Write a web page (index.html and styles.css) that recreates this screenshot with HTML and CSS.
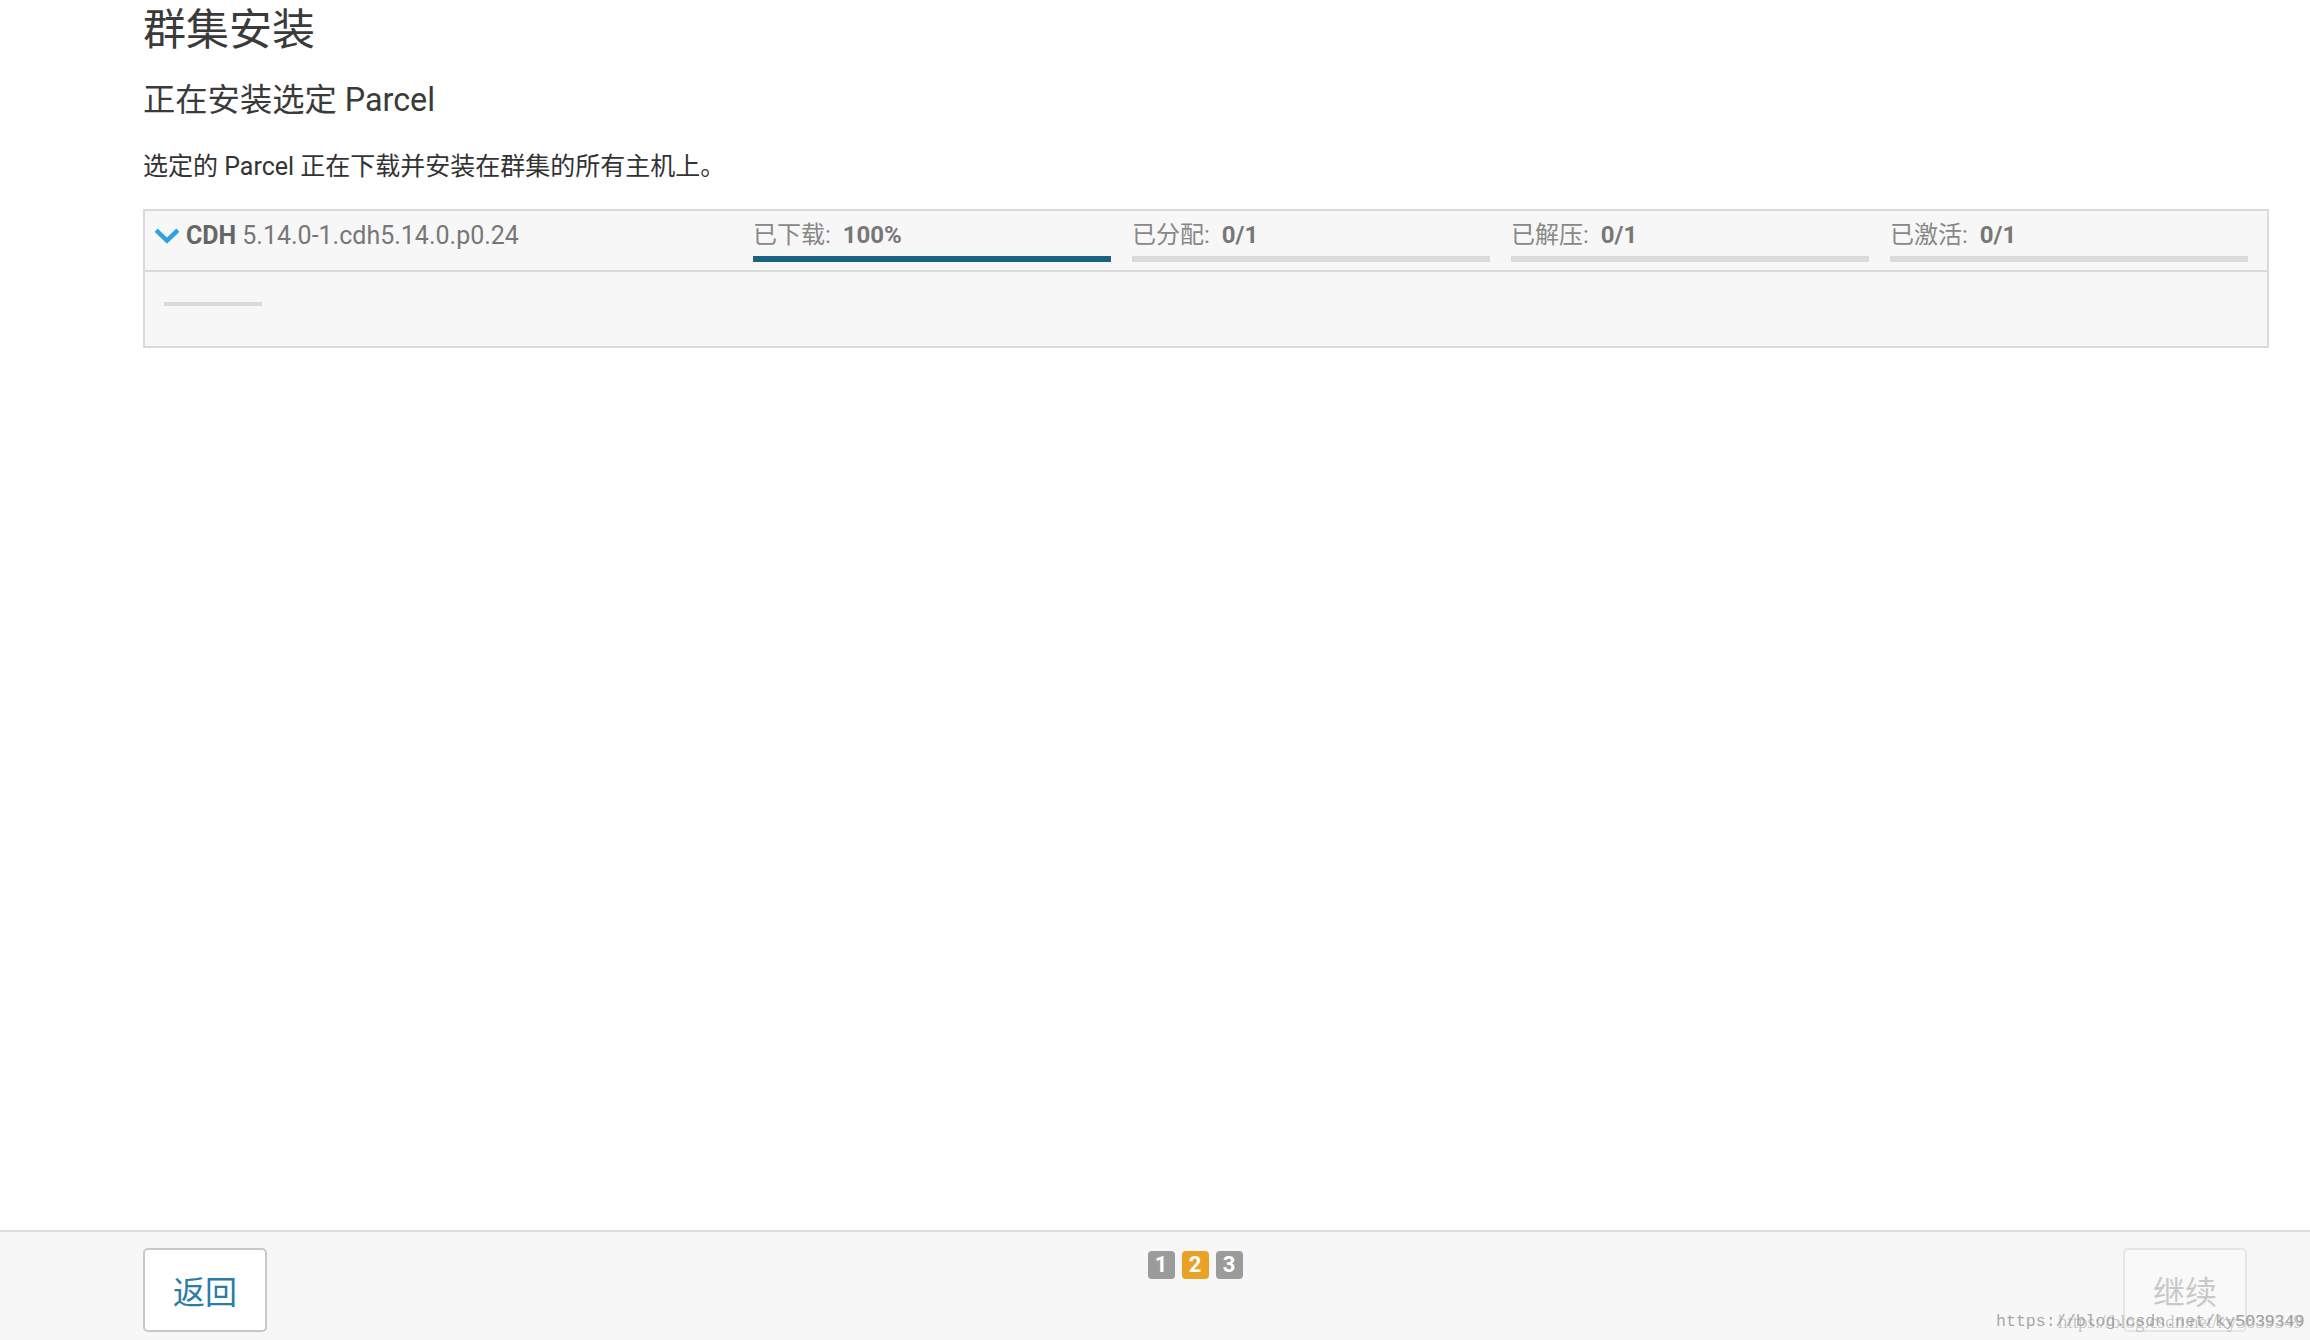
FILE: index.html
```html
<!DOCTYPE html>
<html lang="zh-CN">
<head>
<meta charset="utf-8">
<title>群集安装</title>
<link rel="stylesheet" href="styles.css">
</head>
<body>
<div class="page">
  <main class="content">
    <h1 class="title">群集安装</h1>
    <h2 class="subtitle">正在安装选定 Parcel</h2>
    <p class="desc">选定的 Parcel 正在下载并安装在群集的所有主机上。</p>

    <section class="parcel">
      <div class="parcel-head">
        <div class="parcel-name">
          <svg class="chev" viewBox="0 0 24 16" width="24" height="16" aria-hidden="true">
            <path d="M2.8 3.8 L12 12.6 L21.2 3.8" fill="none" stroke="#2fa3db" stroke-width="4.6" stroke-linecap="square" stroke-linejoin="miter"/>
          </svg>
          <span class="prod">CDH</span><span class="ver">5.14.0-1.cdh5.14.0.p0.24</span>
        </div>
        <div class="stats">
          <div class="stat">
            <div class="stat-label"><span class="k">已下载:</span><b>100%</b></div>
            <div class="bar"><div class="fill" style="width:100%"></div></div>
          </div>
          <div class="stat">
            <div class="stat-label"><span class="k">已分配:</span><b>0/1</b></div>
            <div class="bar"><div class="fill" style="width:0%"></div></div>
          </div>
          <div class="stat">
            <div class="stat-label"><span class="k">已解压:</span><b>0/1</b></div>
            <div class="bar"><div class="fill" style="width:0%"></div></div>
          </div>
          <div class="stat">
            <div class="stat-label"><span class="k">已激活:</span><b>0/1</b></div>
            <div class="bar"><div class="fill" style="width:0%"></div></div>
          </div>
        </div>
      </div>
      <div class="parcel-body">
        <div class="mini-bar"></div>
      </div>
    </section>
  </main>

  <footer class="footer">
    <button class="btn btn-back" type="button">返回</button>
    <div class="steps">
      <span class="step">1</span>
      <span class="step active">2</span>
      <span class="step">3</span>
    </div>
    <button class="btn btn-next" type="button" disabled>继续</button>
    <div class="watermark"><span class="wm-mono">https://blog.csdn.net/ky5039349</span><span class="wm-serif">https://blog.csdn.net/ky5039349</span></div>
  </footer>
</div>
</body>
</html>
```

FILE: styles.css
```css
* { box-sizing: border-box; }

html, body {
  margin: 0;
  padding: 0;
  background: #ffffff;
}

body {
  font-family: Roboto, "Noto Sans CJK SC", sans-serif;
  color: #333333;
}

.page {
  min-height: 100vh;
  display: flex;
  flex-direction: column;
}

.content {
  flex: 1;
  padding: 0 41px 0 143px;
}

.title {
  margin: 0;
  font-size: 43px;
  line-height: 60px;
  font-weight: 400;
  color: #3a3a3a;
}

.subtitle {
  margin: 18px 0 0;
  font-size: 32.3px;
  line-height: 44px;
  font-weight: 400;
  color: #3a3a3a;
}

.desc {
  margin: 28px 0 0;
  font-size: 25px;
  line-height: 34px;
  color: #333333;
}

.parcel {
  margin-top: 25px;
  border: 2px solid #dadada;
  background: #f7f7f7;
}

.parcel-head {
  display: flex;
  align-items: flex-start;
  padding: 9px 19px 8px 8px;
  border-bottom: 2px solid #dadada;
}

.parcel-name {
  flex: 1;
  display: flex;
  align-items: center;
  height: 30px;
  font-size: 25px;
  color: #777777;
}

.chev {
  margin: 2px 7px 0 2px;
  flex: none;
}

.prod {
  font-weight: 700;
  color: #666666;
  margin-right: 6px;
}

.ver {
  color: #777777;
}

.stats {
  display: grid;
  grid-template-columns: repeat(4, 358px);
  column-gap: 21px;
}

.stat-label {
  font-size: 24px;
  line-height: 30px;
  color: #888888;
  white-space: nowrap;
}

.stat-label .k {
  margin-right: 12px;
}

.stat-label b {
  color: #777777;
  font-weight: 700;
}

.bar {
  margin-top: 6px;
  height: 6px;
  background: #dadada;
}

.fill {
  height: 100%;
  background: #1b6381;
}

.parcel-body {
  height: 74px;
  padding: 30px 0 0 19px;
}

.mini-bar {
  width: 98px;
  height: 4px;
  background: #dadada;
}

.footer {
  position: relative;
  display: flex;
  justify-content: space-between;
  align-items: flex-start;
  height: 110px;
  padding: 16px 63px 0 143px;
  background: #f7f7f7;
  border-top: 2px solid #dedede;
}

.btn {
  width: 124px;
  height: 84px;
  border-radius: 5px;
  font-family: Roboto, "Noto Sans CJK SC", sans-serif;
  font-size: 32px;
  padding: 0;
}

.btn-back {
  background: #ffffff;
  border: 2px solid #c8c8c8;
  color: #2b7ca6;
}

.btn-next {
  background: #f9f9f9;
  border: 2px solid #e6e6e6;
  color: #c9c9c9;
}

.steps {
  display: flex;
  gap: 7px;
  margin-top: 3px;
}

.step {
  width: 27px;
  height: 28px;
  border-radius: 4px;
  background: #9b9b9b;
  color: #ffffff;
  font-weight: 700;
  font-size: 22px;
  line-height: 28px;
  text-align: center;
}

.step.active {
  background: #e9a126;
}

.watermark {
  position: absolute;
  left: 1996px;
  top: 77px;
  width: 312px;
  height: 26px;
  pointer-events: none;
}

.wm-mono,
.wm-serif {
  position: absolute;
  top: 0;
  line-height: 26px;
  white-space: nowrap;
}

.wm-mono {
  left: 0;
  font-family: "Liberation Mono", monospace;
  font-size: 16.6px;
  color: rgba(140, 140, 140, 0.75);
}

.wm-serif {
  left: 62px;
  font-family: "Liberation Serif", serif;
  font-size: 19px;
  color: rgba(150, 150, 150, 0.5);
}
```
